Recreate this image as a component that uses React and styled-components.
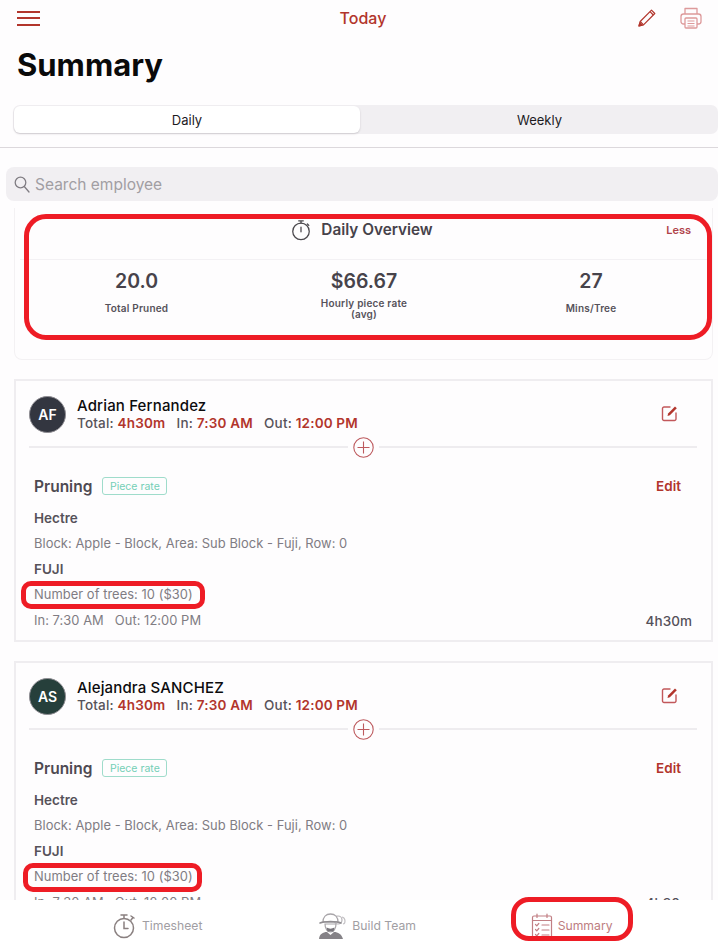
import React from "react";
import styled, { createGlobalStyle } from "styled-components";

const RED = "#b2352c";
const Global = createGlobalStyle`
  html, body { margin: 0; padding: 0; background: #fff; }
  body { font-family: Inter, "Liberation Sans", sans-serif; }
  * { box-sizing: border-box; }
`;
const Page = styled.div`
  width: 718px; height: 943px; overflow: hidden; display: flex; flex-direction: column; background: #fefdfe; position: relative;
`;
const TopBar = styled.header`
  height: 36px; padding: 0 16px 0 17px; display: grid; grid-template-columns: 1fr auto 1fr; align-items: center;
`;
const TopTitle = styled.div`
  font-size: 16px; font-weight: 500; color: ${RED}; margin-left: 7px;
`;
const TopActions = styled.div`
  display: flex; justify-content: flex-end; align-items: center; gap: 23px;
`;
const Hamburger = styled.div`
  width: 23px; display: flex; flex-direction: column; gap: 4.5px;
  span { display: block; height: 2px; background: ${RED}; }
`;
const Title = styled.h1`
  margin: 0; height: 69px; padding: 9px 0 0 17px; font-size: 31px; line-height: 40px; font-weight: 700; color: #0a0a0a;
`;
const Segment = styled.div`
  margin: 0 0 0 13px; height: 29px; width: 705px; background: #f1eff2; border-radius: 7px; display: grid; grid-template-columns: 348px 1fr;
`;
const SegButton = styled.div`
  display: flex; align-items: center; justify-content: center; font-size: 13px; color: #1d1b1f; border-radius: 6px; margin: ${p => p.$on ? "1px" : "0"};
  background: ${p => p.$on ? "#fff" : "transparent"};
  box-shadow: ${p => p.$on ? "0 1px 2px rgba(60,50,60,.2)" : "none"};
`;
const Rule = styled.div`
  height: 1px; background: #dcd8dc; margin-top: 13px;
`;
const Search = styled.div`
  margin: 19px 0 7px 6px; height: 34px; width: 712px; background: #f1eff2; border-radius: 8px; display: flex; align-items: center; gap: 5px; padding-left: 8px;
  font-size: 15.5px; color: #a19ea3;
`;
const Scroll = styled.main`
  flex: 1; min-height: 0; overflow: hidden; padding: 0 5px 0 14px; display: flex; flex-direction: column; gap: 19px;
`;
const Overview = styled.section`
  height: 152px; flex: none; border: 1px solid #f3f1f3; border-top: none; border-radius: 0 0 8px 8px; position: relative;
`;
const OverviewHead = styled.div`
  height: 52px; display: flex; align-items: flex-start; justify-content: center; gap: 9px; padding-top: 11px; position: relative; border-bottom: 1px solid #f3f1f4;
  margin: 0 5px;
`;
const OverviewTitle = styled.div`
  font-size: 15.3px; font-weight: 600; color: #46424a; line-height: 22px; margin-right: 4px;
`;
const Less = styled.span`
  position: absolute; right: 16px; top: 15px; font-size: 11px; font-weight: 600; color: #b0434a;
`;
const Stats = styled.div`
  display: grid; grid-template-columns: 243px 212px 1fr; padding-top: 10px;
`;
const Stat = styled.div`
  display: flex; flex-direction: column; align-items: center; text-align: center;
`;
const StatValue = styled.div`
  font-size: 19.5px; line-height: 22px; font-weight: 600; color: #47434b; height: 26px;
`;
const StatLabel = styled.div`
  font-size: 10px; line-height: 11px; font-weight: 600; color: #56525a; height: 24px; display: flex; align-items: center; justify-content: center;
  margin-top: ${p => p.$two ? "1px" : "0"}; letter-spacing: .2px;
`;
const Marker = styled.div`
  position: absolute; border: 5px solid #ee1c25; pointer-events: none;
  left: ${p => p.$l}px; top: ${p => p.$t}px; width: ${p => p.$w}px; height: ${p => p.$h}px; border-radius: ${p => p.$r}px;
`;
const Card = styled.article`
  flex: none; height: 263px; border: 2px solid #efedf0; padding: 14px 14px 0 13px; position: relative;
`;
const Person = styled.div`
  display: flex; align-items: center; gap: 11px; height: 38px;
`;
const Avatar = styled.div`
  width: 37px; height: 37px; border-radius: 50%; flex: none; background: ${p => p.$bg}; color: #fff; font-size: 14px; font-weight: 600;
  display: flex; align-items: center; justify-content: center; border: 1px solid #8e8c92;
`;
const PersonInfo = styled.div`
  flex: 1; display: flex; flex-direction: column;
`;
const Name = styled.div`
  font-size: 15px; font-weight: 500; line-height: 18px; color: #0c0b0d; letter-spacing: .15px;
`;
const Times = styled.div`
  font-size: 13.5px; line-height: 17px; font-weight: 500; color: #57535a; white-space: pre; letter-spacing: .17px;
  b { font-weight: 600; color: ${RED}; }
`;
const Separator = styled.div`
  display: flex; align-items: center; gap: 5px; height: 20px; margin-top: 4px;
  &::before, &::after { content: ""; flex: 1; height: 1.5px; background: #eeecef; }
`;
const Block = styled.div`
  padding: 0 5px 0 5px;
`;
const Job = styled.div`
  height: 20px; margin-top: 19px; display: flex; align-items: center; gap: 10px;
`;
const JobName = styled.div`
  font-size: 15.5px; font-weight: 600; color: #4e4a52;
`;
const Badge = styled.div`
  height: 18px; width: 65px; border: 1px solid #9fdccb; border-radius: 3px; color: #74cfb6; font-size: 10.5px;
  display: flex; align-items: center; justify-content: center;
`;
const EditLink = styled.div`
  margin-left: auto; font-size: 13.5px; font-weight: 600; color: ${RED}; margin-right: 11px;
`;
const Lines = styled.div`
  margin-top: 9px;
`;
const Line = styled.div`
  height: 25.7px; display: flex; align-items: center; justify-content: space-between; font-size: ${p => p.$strong ? "13.5px" : "12.9px"}; color: ${p => p.$strong ? "#56525a" : "#807c83"}; font-weight: ${p => p.$strong ? 600 : 400}; white-space: pre; letter-spacing: ${p => p.$strong ? "0" : ".05px"};
`;
const Duration = styled.span`
  color: #55515a; font-weight: 500; font-size: 13.5px;
`;
const TabBar = styled.nav`
  flex: none; height: 43px; background: #fff; display: grid; grid-template-columns: 1fr 1fr 1fr; padding-top: 8px;
`;
const Tab = styled.div`
  display: flex; align-items: center; gap: 5px; padding-left: ${p => p.$pad}px; font-size: 12.2px; color: ${p => p.$on ? "#bd7d80" : "#a19ea3"};
`;

const Stopwatch = ({ size = 22, color = "#4c494e" }) => (
  <svg width={size} height={size} viewBox="0 0 24 24" fill="none" stroke={color} strokeWidth="1.4" strokeLinecap="round">
    <circle cx="12" cy="13.5" r="9" />
    <path d="M12 4.5V2M9.5 2h5M19 5.5l1.5 1.5M12 9v5h0" />
  </svg>
);
const ClockTab = () => (
  <svg width="24" height="26" viewBox="0 0 24 26" fill="none" stroke="#8a8080" strokeWidth="1.5" strokeLinecap="round">
    <circle cx="11" cy="15" r="9.5" />
    <path d="M11 9v6.5h4M11 5.5V2.5M8 2h6M18 7l2-2.5M18 3l3 2" />
  </svg>
);
const BuildTeam = () => (
  <svg width="29" height="26" viewBox="0 0 29 26">
    <circle cx="20" cy="7" r="4" fill="none" stroke="#b6b3b7" strokeWidth="1.2" />
    <path d="M24 4c2 .5 3 2 3 4s-1 3-2 3" fill="none" stroke="#c5c3c6" strokeWidth="1.2" />
    <path d="M5 9c0-5 3-8 7.500-8S20 4 20 9z" fill="#fff" stroke="#a8a5a9" strokeWidth="1.3" />
    <path d="M2 10c5-2 16-2 21 0" fill="none" stroke="#8f8c90" strokeWidth="1.6" strokeLinecap="round" />
    <path d="M7 11c0 5 2.500 8 5.500 8s5.500-3 5.500-8z" fill="none" stroke="#a8a5a9" strokeWidth="1.2" />
    <path d="M8.500 14.500c2.500 1.500 5.500 1.500 8 0l-1 4h-6z" fill="#77747a" />
    <path d="M1 26c.5-5 4-7 8-7l3.500 3 3.500-3c4 0 7.500 2 9 7z" fill="#858287" />
  </svg>
);
const SummaryIcon = () => (
  <svg width="22" height="26" viewBox="0 0 22 26" fill="none" stroke="#c17f84" strokeWidth="1.2" strokeLinecap="round" strokeLinejoin="round">
    <rect x="1.500" y="3" width="19" height="22" rx="1.500" />
    <path d="M1.500 7.500h19M6 1v3.500M16 1v3.500" />
    <path d="M4.500 11.500l1.300 1.300 2-2.300M4.500 16.500l1.300 1.300 2-2.300M4.500 21.500l1.300 1.300 2-2.300M11 12h7M11 17h7M11 22h7" />
  </svg>
);
const Pencil = () => (
  <svg width="20" height="20" viewBox="0 0 20 20" fill="none" stroke="#b2352c" strokeWidth="1.2" strokeLinejoin="round">
    <path d="M2 18l1.200-4.500L14.500 2.200l3.300 3.300L6.500 16.800z" />
    <path d="M3.200 13.500l3.300 3.300M13 3.700l3.300 3.300" />
    <path d="M2 18l.8-3 2.200 2.200z" fill="#b2352c" />
  </svg>
);
const Printer = () => (
  <svg width="22" height="22" viewBox="0 0 22 22" fill="none" stroke="#dd9a9b" strokeWidth="1.300" strokeLinejoin="round">
    <path d="M5 7V1.500h12V7" />
    <rect x="1" y="7" width="20" height="10" rx="2.500" />
    <rect x="5" y="11" width="12" height="10" rx="1" fill="#fefdfe" />
    <path d="M7.500 14h7M7.500 16.500h7M7.500 19h7" strokeWidth="1" />
  </svg>
);
const SearchIcon = () => (
  <svg width="16" height="17" viewBox="0 0 16 17" fill="none" stroke="#807d83" strokeWidth="1.3" strokeLinecap="round">
    <circle cx="6.500" cy="6.500" r="5.300" />
    <path d="M10.500 10.800L15 16" />
  </svg>
);
const EditSquareIcon = styled.svg`
  margin-right: 19px; flex: none; margin-top: -2px;
`;
const EditSquare = () => (
  <EditSquareIcon width="17" height="17" viewBox="0 0 17 17" fill="none" stroke="#c2585b" strokeWidth="1.400" strokeLinecap="round" strokeLinejoin="round">
    <path d="M9 2H3a1.500 1.500 0 0 0-1.500 1.500v10.500A1.500 1.500 0 0 0 3 15.500h10.500A1.500 1.500 0 0 0 15 14V8" />
    <path d="M6.500 11l.6-2.500L14 1.500l1.800 1.800L8.900 10.300z" fill="#b2352c" stroke="none" />
  </EditSquareIcon>
);
const Plus = () => (
  <svg width="21" height="21" viewBox="0 0 21 21" fill="none" stroke="#bd5a5e" strokeWidth="1.100">
    <circle cx="10.500" cy="10.500" r="9.700" />
    <path d="M10.500 4.500v12M4.500 10.500h12" />
  </svg>
);

const people = [
  { initials: "AF", name: "Adrian Fernandez", bg: "#333640", mark: { l: 5, t: 200, w: 184, h: 28 } },
  { initials: "AS", name: "Alejandra SANCHEZ", bg: "#263f3b", mark: { l: 7, t: 200, w: 179, h: 29 } },
];

const EmployeeCard = ({ person }) => (
  <Card>
    <Person>
      <Avatar $bg={person.bg}>{person.initials}</Avatar>
      <PersonInfo>
        <Name>{person.name}</Name>
        <Times>Total: <b>4h30m</b>   In: <b>7:30 AM</b>   Out: <b>12:00 PM</b></Times>
      </PersonInfo>
      <EditSquare />
    </Person>
    <Separator><Plus /></Separator>
    <Block>
      <Job>
        <JobName>Pruning</JobName>
        <Badge>Piece rate</Badge>
        <EditLink>Edit</EditLink>
      </Job>
      <Lines>
        <Line $strong>Hectre</Line>
        <Line>Block: Apple - Block, Area: Sub Block - Fuji, Row: 0</Line>
        <Line $strong>FUJI</Line>
        <Line>Number of trees: 10 ($30)</Line>
        <Line>In: 7:30 AM   Out: 12:00 PM<Duration>4h30m</Duration></Line>
      </Lines>
    </Block>
    <Marker $l={person.mark.l} $t={person.mark.t} $w={person.mark.w} $h={person.mark.h} $r={10} />
  </Card>
);

export default function App() {
  return (
    <Page>
      <Global />
      <TopBar>
        <Hamburger><span /><span /><span /></Hamburger>
        <TopTitle>Today</TopTitle>
        <TopActions><Pencil /><Printer /></TopActions>
      </TopBar>
      <Title>Summary</Title>
      <Segment>
        <SegButton $on>Daily</SegButton>
        <SegButton>Weekly</SegButton>
      </Segment>
      <Rule />
      <Search><SearchIcon />Search employee</Search>
      <Scroll>
        <Overview>
          <OverviewHead>
            <Stopwatch />
            <OverviewTitle>Daily Overview</OverviewTitle>
            <Less>Less</Less>
          </OverviewHead>
          <Stats>
            <Stat><StatValue>20.0</StatValue><StatLabel>Total Pruned</StatLabel></Stat>
            <Stat><StatValue>$66.67</StatValue><StatLabel $two>Hourly piece rate<br />(avg)</StatLabel></Stat>
            <Stat><StatValue>27</StatValue><StatLabel>Mins/Tree</StatLabel></Stat>
          </Stats>
          <Marker $l={9} $t={6} $w={688} $h={126} $r={22} />
        </Overview>
        {people.map(p => <EmployeeCard key={p.initials} person={p} />)}
      </Scroll>
      <TabBar>
        <Tab $pad={113}><ClockTab />Timesheet</Tab>
        <Tab $pad={79}><BuildTeam />Build Team</Tab>
        <Tab $on $pad={52}><SummaryIcon />Summary</Tab>
      </TabBar>
      <Marker $l={511} $t={897} $w={122} $h={44} $r={18} />
    </Page>
  );
}
